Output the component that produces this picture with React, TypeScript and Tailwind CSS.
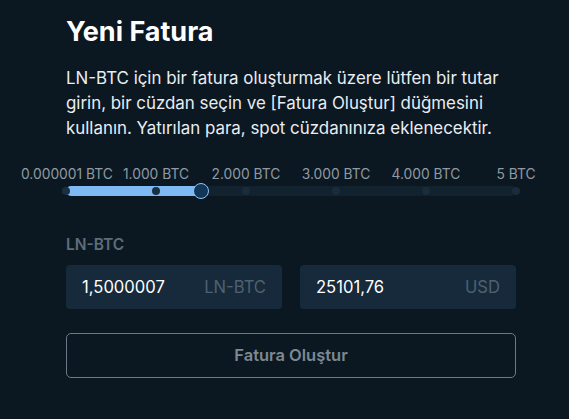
import React from 'react';

const labels = ['0.000001 BTC', '1.000 BTC', '2.000 BTC', '3.000 BTC', '4.000 BTC', '5 BTC'];
const stops = [0, 20, 40, 60, 80, 100];
const value = 30;

export default function App() {
  return (
    <div className="min-h-[419px] w-full bg-[#0b1822] font-['Inter',sans-serif] text-[#eef1f4]">
      <div className="pl-[66px] pt-[14px] w-[530px]">
        <h1 className="text-[27px] font-bold leading-[36px] text-white">Yeni Fatura</h1>
        <p className="mt-[16px] text-[16.9px] leading-[25px] text-[#e9edf1]">
          LN-BTC için bir fatura oluşturmak üzere lütfen bir tutar girin, bir cüzdan seçin ve [Fatura Oluştur] düğmesini kullanın. Yatırılan para, spot cüzdanınıza eklenecektir.
        </p>
      </div>

      {/* slider */}
      <div className="mt-[25px] pl-[21px]">
        <div className="grid w-[540px] grid-cols-6 text-center text-[13.8px] leading-[17px] text-[#8f9aa3]">
          {labels.map((l) => (
            <span key={l} className="whitespace-nowrap">{l}</span>
          ))}
        </div>
      </div>
      <div className="ml-[62px] mt-[1px] w-[458px] py-[2px]">
        <div className="relative mx-[4px] h-[10px] rounded-full bg-[#13222f]">
          <div className="absolute left-0 top-0 h-[10px] rounded-l-full bg-[#7fb9f4]" style={{ width: `${value * 4.5}px` }} />
          {stops.map((s) => (
            <div
              key={s}
              className={`absolute top-[1px] h-[8px] w-[8px] -translate-x-1/2 rounded-full ${s <= value ? 'bg-[#1b2f42]' : 'bg-[#1a2b3a]'}`}
              style={{ left: `${s * 4.5}px` }}
            />
          ))}
          <div
            className="absolute top-[-3px] h-[16px] w-[16px] -translate-x-1/2 rounded-full border border-[#8cc4f7] bg-[#113657]"
            style={{ left: `${value * 4.5}px` }}
          />
        </div>
      </div>

      <div className="pl-[66px] w-[516px]">
        <div className="mt-[37px] text-[15.5px] font-semibold leading-[20px] text-[#5e6d79]">LN-BTC</div>
        <div className="mt-[10px] flex gap-[18px]">
          <div className="flex h-[44px] flex-1 items-center justify-between rounded-[4px] bg-[#172a3b] px-[16px] text-[16.6px]">
            <span className="text-white">1,5000007</span>
            <span className="text-[#4d6170]">LN-BTC</span>
          </div>
          <div className="flex h-[44px] flex-1 items-center justify-between rounded-[4px] bg-[#172a3b] px-[16px] text-[16.6px]">
            <span className="text-white">25101,76</span>
            <span className="text-[#4d6170]">USD</span>
          </div>
        </div>
        <button className="mt-[24px] flex h-[45px] w-full items-center justify-center rounded-[5px] border border-[#6c7a85] text-[16.5px] font-semibold text-[#7c8993]">
          Fatura Oluştur
        </button>
      </div>
    </div>
  );
}
